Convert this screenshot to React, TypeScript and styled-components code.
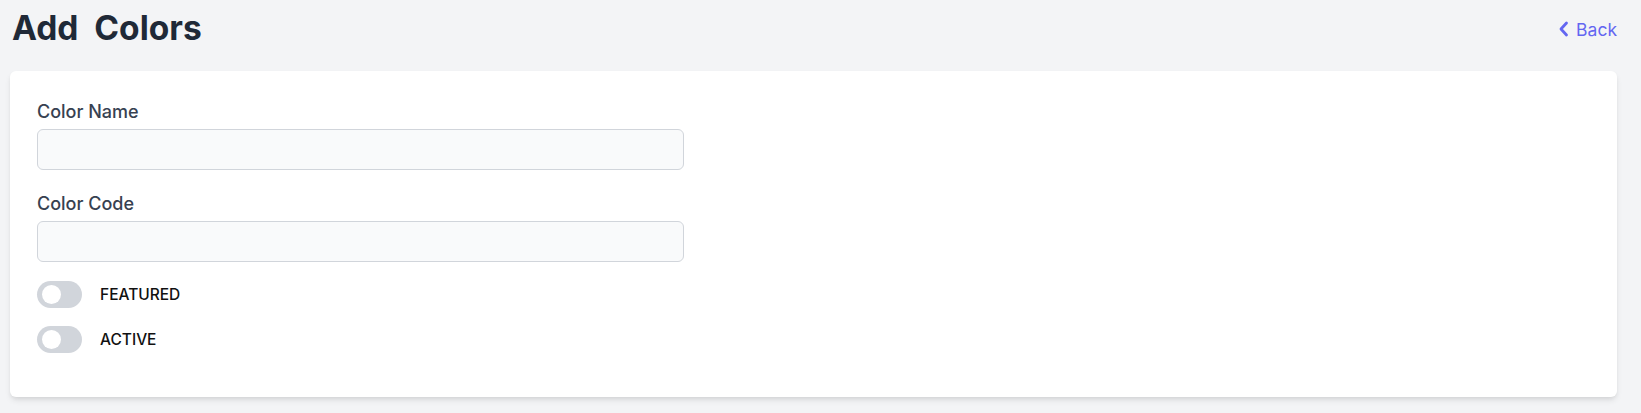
import React, { useState } from 'react';
import styled, { createGlobalStyle } from 'styled-components';

const GlobalStyle = createGlobalStyle`
  html, body {
    margin: 0;
    padding: 0;
    background: #f3f4f6;
    font-family: Inter, "Noto Sans", sans-serif;
  }
  * { box-sizing: border-box; }
`;

const Page = styled.div`
  padding: 0 24px 16px 10px;
  min-height: 100vh;
`;

const Header = styled.div`
  display: flex;
  align-items: center;
  justify-content: space-between;
  height: 71px;
  padding-bottom: 15px;
`;

const Title = styled.h1`
  margin: 0;
  padding-left: 2px;
  font-size: 33.5px;
  font-weight: 700;
  color: #1f2937;
  white-space: pre;
`;

const BackLink = styled.a`
  display: flex;
  align-items: center;
  gap: 7px;
  color: #6366f1;
  font-size: 17.5px;
  text-decoration: none;
  cursor: pointer;
  padding-top: 2px;
`;

const Card = styled.div`
  background: #fff;
  border-radius: 6px;
  box-shadow: 0 4px 6px -1px rgba(0, 0, 0, 0.1), 0 2px 4px -1px rgba(0, 0, 0, 0.06);
  padding: 29px 27px 44px;
  display: flex;
  flex-direction: column;
`;

const Field = styled.div`
  display: flex;
  flex-direction: column;
  width: 647px;
  margin-bottom: 22px;
`;

const Label = styled.label`
  font-size: 18px;
  font-weight: 500;
  color: #374151;
  line-height: 24px;
  margin-bottom: 5px;
`;

const Input = styled.input`
  height: 41px;
  border: 1px solid #d1d5db;
  border-radius: 6px;
  background: #f9fafb;
  padding: 0 12px;
  font-family: inherit;
  font-size: 15px;
  outline: none;
`;

const ToggleRow = styled.label<{ $first?: boolean }>`
  display: flex;
  align-items: center;
  gap: 18px;
  margin-top: ${(p) => (p.$first ? '-3px' : '18px')};
  cursor: pointer;
`;

const Track = styled.span<{ $on: boolean }>`
  position: relative;
  width: 45px;
  height: 27px;
  border-radius: 14px;
  background: ${(p) => (p.$on ? '#6366f1' : '#d1d5db')};
  flex-shrink: 0;
`;

const Knob = styled.span<{ $on: boolean }>`
  position: absolute;
  top: 4px;
  left: ${(p) => (p.$on ? '22px' : '5px')};
  width: 19px;
  height: 19px;
  border-radius: 50%;
  background: #fff;
`;

const ToggleText = styled.span`
  font-size: 15.5px;
  font-weight: 500;
  color: #111;
`;

const Toggle = ({ label, first }: { label: string; first?: boolean }) => {
  const [on, setOn] = useState(false);
  return (
    <ToggleRow $first={first} onClick={() => setOn(!on)}>
      <Track $on={on}>
        <Knob $on={on} />
      </Track>
      <ToggleText>{label}</ToggleText>
    </ToggleRow>
  );
};

const App = () => {
  return (
    <Page>
      <GlobalStyle />
      <Header>
        <Title>{'Add  Colors'}</Title>
        <BackLink>
          <svg width="10" height="16" viewBox="0 0 10 16" fill="none">
            <path d="M7.5 2 L2 8 L7.5 14" stroke="#6366f1" strokeWidth="2.8" strokeLinecap="round" strokeLinejoin="round" />
          </svg>
          Back
        </BackLink>
      </Header>
      <Card>
        <Field>
          <Label>Color Name</Label>
          <Input />
        </Field>
        <Field>
          <Label>Color Code</Label>
          <Input />
        </Field>
        <Toggle label="FEATURED" first />
        <Toggle label="ACTIVE" />
      </Card>
    </Page>
  );
};

export default App;
